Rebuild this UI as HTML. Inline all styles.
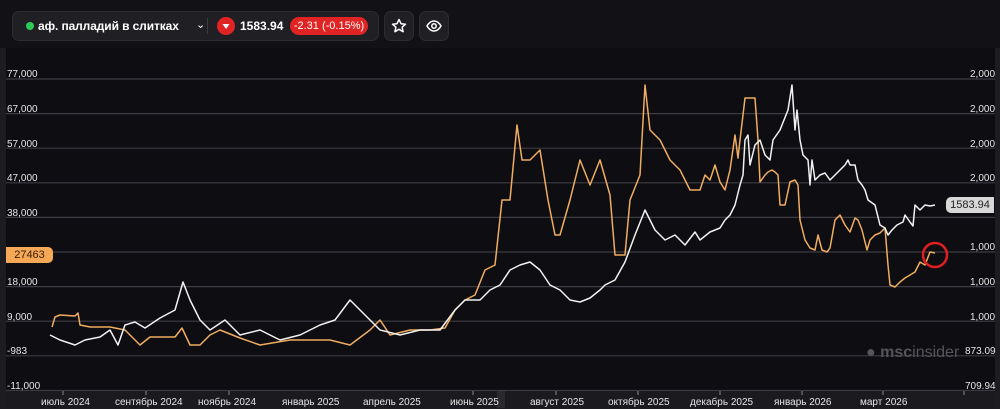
<!DOCTYPE html>
<html><head><meta charset="utf-8"><style>
body{margin:0;width:1000px;height:409px;background:#1d1d21;overflow:hidden;font-family:"Liberation Sans",sans-serif;position:relative}
.top{position:absolute;left:0;top:0;width:1000px;height:48px;background:#121216}
.pill{position:absolute;top:11px;height:28px;background:#1f1f24;border:1px solid #2c2c32;border-radius:7px;color:#fff}
.chart{position:absolute;left:6px;top:48px;width:989px;height:356px;background:#0d0d12}
.lab{position:absolute;font-size:10px;color:#e6e6e6}
</style></head><body>
<div class="top"></div>
<div class="pill" style="left:12px;width:365px">
 <div style="position:absolute;left:13px;top:10px;width:8px;height:8px;border-radius:50%;background:#2ecc55"></div>
 <div style="position:absolute;left:25px;top:7px;font-size:12px;font-weight:bold;letter-spacing:-0.1px">аф. палладий в слитках</div>
 <div style="position:absolute;left:183px;top:6px;font-size:11px">⌄</div>
 <div style="position:absolute;left:194px;top:6px;width:1px;height:16px;background:#3a3a40"></div>
 <div style="position:absolute;left:204px;top:5px;width:18px;height:18px;border-radius:50%;background:#e02424"><svg width="18" height="18"><path d="M5.5 7h7l-3.5 5z" fill="#fff"/></svg></div>
 <div style="position:absolute;left:227px;top:7px;font-size:12px;font-weight:bold">1583.94</div>
 <div style="position:absolute;left:277px;top:5px;width:78px;height:18px;border-radius:9px;background:#e02424;font-size:11px;text-align:center;line-height:18px">-2.31 (-0.15%)</div>
</div>
<div class="pill" style="left:384px;width:28px"><svg width="28" height="28"><path d="M14 7.5l2 4.2 4.5.5-3.4 3 1 4.5-4.1-2.4-4.1 2.4 1-4.5-3.4-3 4.5-.5z" fill="none" stroke="#fff" stroke-width="1.5" stroke-linejoin="round"/></svg></div>
<div class="pill" style="left:419px;width:28px"><svg width="28" height="28"><path d="M7 14c2-3.5 4.5-5 7-5s5 1.5 7 5c-2 3.5-4.5 5-7 5s-5-1.5-7-5z" fill="none" stroke="#fff" stroke-width="1.5"/><circle cx="14" cy="14" r="2.2" fill="none" stroke="#fff" stroke-width="1.5"/></svg></div>
<div class="chart"></div>
<svg style="position:absolute;left:0;top:0" width="1000" height="409">
<g stroke="#3c3c42" stroke-width="1.2">
<line x1="6" x2="995" y1="79" y2="79"/><line x1="6" x2="995" y1="113.6" y2="113.6"/><line x1="6" x2="995" y1="148.2" y2="148.2"/><line x1="6" x2="995" y1="182.8" y2="182.8"/><line x1="6" x2="995" y1="217.4" y2="217.4"/><line x1="6" x2="995" y1="252" y2="252"/><line x1="6" x2="995" y1="286.6" y2="286.6"/><line x1="6" x2="995" y1="321.2" y2="321.2"/><line x1="6" x2="995" y1="355.8" y2="355.8"/><line x1="6" x2="995" y1="390.5" y2="390.5"/>
</g>
<rect x="6" y="391" width="989" height="17" fill="#1b1b1f"/>
<rect x="497" y="391" width="8" height="17" fill="#2a2a2e"/>
<polyline fill="none" stroke="#f0ad60" stroke-width="1.5" stroke-linejoin="round" points="52,327 55,317 60,315 75,316 78,313 80,325 90,327 110,327 125,330 140,345 150,337 175,337 182,328 190,345 200,345 210,335 220,330 240,338 260,345 290,340 310,340 330,340 350,345 370,330 380,320 390,335 410,330 430,330 445,328 455,310 465,300 475,295 485,270 495,265 502,200 510,200 517,125 522,160 530,160 540,150 548,200 555,235 560,235 570,200 580,160 590,185 600,160 610,195 615,255 625,255 630,200 640,175 645,85 650,130 660,140 670,160 680,170 690,190 700,190 705,175 710,180 715,165 720,182 725,190 730,170 735,135 738,158 740,140 743,115 745,98 755,98 758,140 760,182 765,175 768,172 772,170 775,172 778,175 780,205 785,205 790,182 795,180 798,185 800,220 805,240 810,248 815,250 818,235 822,250 827,252 830,248 835,220 840,215 845,225 850,232 855,218 858,220 862,230 867,250 870,240 875,235 880,233 885,228 888,265 890,285 895,287 900,282 905,278 910,275 915,272 920,262 925,265 930,252 935,253"/>
<polyline fill="none" stroke="#f2f2f2" stroke-width="1.5" stroke-linejoin="round" points="50,335 60,340 75,345 85,340 100,337 110,330 118,345 125,325 135,322 145,328 160,318 175,310 183,282 190,300 200,320 210,330 225,320 240,335 260,330 280,340 300,335 320,325 335,320 350,300 360,310 380,330 400,335 420,330 440,330 455,310 465,300 480,300 490,290 500,285 510,270 520,265 530,262 540,270 550,285 560,290 570,300 580,302 590,298 600,290 605,285 615,280 625,262 635,235 645,210 655,230 665,240 675,235 685,245 695,232 700,240 710,232 720,228 725,220 730,215 735,205 740,185 743,175 745,140 748,135 750,165 755,145 760,140 765,155 770,160 773,140 780,130 788,110 792,85 795,130 797,110 800,140 803,155 808,160 810,185 812,160 815,180 820,175 825,173 830,180 835,175 840,170 845,165 848,160 850,165 855,165 858,180 862,185 865,190 868,200 875,205 880,225 885,228 888,235 892,230 897,225 903,222 905,215 910,222 913,226 915,205 920,210 925,205 930,206 935,205"/>
<circle cx="935" cy="255" r="12" fill="none" stroke="#e02020" stroke-width="2.5"/>
<g stroke="#888" stroke-width="1"><line x1="63" x2="63" y1="391" y2="395"/><line x1="146" x2="146" y1="391" y2="395"/><line x1="229" x2="229" y1="391" y2="395"/><line x1="473" x2="473" y1="391" y2="395"/><line x1="556" x2="556" y1="391" y2="395"/><line x1="638" x2="638" y1="391" y2="395"/><line x1="720" x2="720" y1="391" y2="395"/><line x1="802" x2="802" y1="391" y2="395"/><line x1="883" x2="883" y1="391" y2="395"/><line x1="964" x2="964" y1="391" y2="395"/></g>
</svg>
<div class="lab" style="left:7px;top:69px">77,000</div><div class="lab" style="left:7px;top:104px">67,000</div><div class="lab" style="left:7px;top:139px">57,000</div><div class="lab" style="left:7px;top:173px">47,000</div><div class="lab" style="left:7px;top:208px">38,000</div><div class="lab" style="left:7px;top:277px">18,000</div><div class="lab" style="left:7px;top:312px">9,000</div><div class="lab" style="left:7px;top:346px">-983</div><div class="lab" style="left:7px;top:381px">-11,000</div>
<div style="position:absolute;left:6px;top:247px;width:47px;height:16px;background:#f5a956;border-radius:0 5px 5px 0;font-size:11px;color:#3a2000;line-height:16px;text-align:center">27463</div>
<div class="lab" style="left:970px;top:69px">2,000</div><div class="lab" style="left:970px;top:104px">2,000</div><div class="lab" style="left:970px;top:139px">2,000</div><div class="lab" style="left:970px;top:173px">2,000</div><div class="lab" style="left:970px;top:242px">1,000</div><div class="lab" style="left:970px;top:277px">1,000</div><div class="lab" style="left:970px;top:312px">1,000</div><div class="lab" style="left:965px;top:346px">873.09</div><div class="lab" style="left:965px;top:381px">709.94</div>
<div style="position:absolute;left:946px;top:197px;width:48px;height:16px;background:#d8d8d8;border-radius:5px 0 0 5px;font-size:11px;color:#222;line-height:16px;text-align:center">1583.94</div>
<div style="position:absolute;left:866px;top:344px;font-size:16px;color:#55555a;font-weight:bold">● msc<span style="font-weight:normal">insider</span></div>
<div class="lab" style="left:41px;top:397px">июль 2024</div><div class="lab" style="left:115px;top:397px">сентябрь 2024</div><div class="lab" style="left:198px;top:397px">ноябрь 2024</div><div class="lab" style="left:282px;top:397px">январь 2025</div><div class="lab" style="left:363px;top:397px">апрель 2025</div><div class="lab" style="left:450px;top:397px">июнь 2025</div><div class="lab" style="left:530px;top:397px">август 2025</div><div class="lab" style="left:608px;top:397px">октябрь 2025</div><div class="lab" style="left:690px;top:397px">декабрь 2025</div><div class="lab" style="left:774px;top:397px">январь 2026</div><div class="lab" style="left:860px;top:397px">март 2026</div>
</body></html>
